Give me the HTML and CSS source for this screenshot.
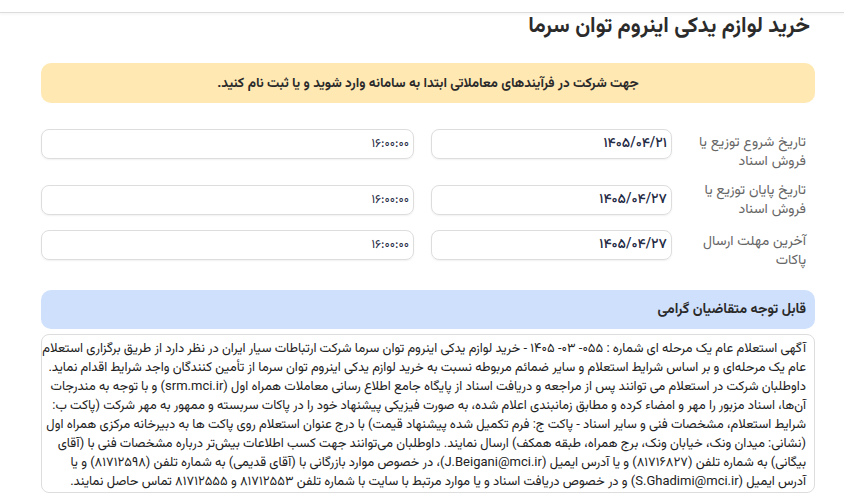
FILE: index.html
```html
<!DOCTYPE html>
<html lang="fa" dir="rtl">
<head>
<meta charset="utf-8">
<title>خرید لوازم یدکی اینروم توان سرما</title>
<link rel="stylesheet" href="styles.css">
</head>
<body>
<div class="topbar"></div>
<main class="page">
  <h1 class="title">خرید لوازم یدکی اینروم توان سرما</h1>
  <div class="alert">جهت شرکت در فرآیندهای معاملاتی ابتدا به سامانه وارد شوید و یا ثبت نام کنید.</div>

  <div class="form">
    <div class="row row-1">
      <div class="lbl">تاریخ شروع توزیع یا فروش اسناد</div>
      <div class="field date">۱۴۰۵/۰۴/۲۱</div>
      <div class="field time">۱۶:۰۰:۰۰</div>
    </div>
    <div class="row row-2">
      <div class="lbl">تاریخ پایان توزیع یا فروش اسناد</div>
      <div class="field date">۱۴۰۵/۰۴/۲۷</div>
      <div class="field time">۱۶:۰۰:۰۰</div>
    </div>
    <div class="row row-3">
      <div class="lbl">آخرین مهلت ارسال پاکات</div>
      <div class="field date">۱۴۰۵/۰۴/۲۷</div>
      <div class="field time">۱۶:۰۰:۰۰</div>
    </div>
  </div>

  <div class="notice-head">قابل توجه متقاضیان گرامی</div>
  <div class="notice-body">
    <span class="ln">آگهی استعلام عام یک مرحله ای شماره : ۰۵۵- ۰۳- ۱۴۰۵ - خرید لوازم یدکی اینروم توان سرما شرکت ارتباطات سیار ایران در نظر دارد از طریق برگزاری استعلام</span>
    <span class="ln">عام یک مرحله‌ای و بر اساس شرایط استعلام و سایر ضمائم مربوطه نسبت به خرید لوازم یدکی اینروم توان سرما از تأمین کنندگان واجد شرایط اقدام نماید.</span>
    <span class="ln">داوطلبان شرکت در استعلام می توانند پس از مراجعه و دریافت اسناد از پایگاه جامع اطلاع رسانی معاملات همراه اول (srm.mci.ir) و با توجه به مندرجات</span>
    <span class="ln">آن‌ها، اسناد مزبور را مهر و امضاء کرده و مطابق زمانبندی اعلام شده، به صورت فیزیکی پیشنهاد خود را در پاکات سربسته و ممهور به مهر شرکت (پاکت ب:</span>
    <span class="ln">شرایط استعلام، مشخصات فنی و سایر اسناد - پاکت ج: فرم تکمیل شده پیشنهاد قیمت) با درج عنوان استعلام روی پاکت ها به دبیرخانه مرکزی همراه اول</span>
    <span class="ln">(نشانی: میدان ونک، خیابان ونک، برج همراه، طبقه همکف) ارسال نمایند. داوطلبان می‌توانند جهت کسب اطلاعات بیش‌تر درباره مشخصات فنی با (آقای</span>
    <span class="ln">بیگانی) به شماره تلفن (۸۱۷۱۶۸۲۷) و یا آدرس ایمیل (J.Beigani@mci.ir)، در خصوص موارد بازرگانی با (آقای قدیمی) به شماره تلفن (۸۱۷۱۲۵۹۸) و یا</span>
    <span class="ln">آدرس ایمیل (S.Ghadimi@mci.ir) و در خصوص دریافت اسناد و یا موارد مرتبط با سایت با شماره تلفن ۸۱۷۱۲۵۵۳ و ۸۱۷۱۲۵۵۵ تماس حاصل نمایند.</span>
  </div>
</main>
</body>
</html>
```
FILE: styles.css
```css
html, body {
  margin: 0;
  padding: 0;
  background: #ffffff;
}
body {
  direction: rtl;
  font-family: "Vazirmatn", "Noto Sans Arabic", "DejaVu Sans", sans-serif;
  color: #333333;
}
.topbar {
  height: 12px;
  border-bottom: 1px solid #dcdcdc;
  box-shadow: 0 2px 2px rgba(0,0,0,0.03);
}
.page {
  padding: 0 29px 0 41px;
}
.title {
  margin: 2px 5px 0 0;
  font-size: 21.5px;
  line-height: 24px;
  font-weight: bold;
  color: #2b2b2b;
}
.alert {
  margin-top: 24px;
  height: 40px;
  display: flex;
  align-items: center;
  justify-content: center;
  background: #ffe8b2;
  border-radius: 10px;
  font-size: 13.5px;
  font-weight: bold;
  color: #2a2a2a;
}
.form {
  margin-top: 26px;
  display: flex;
  flex-direction: column;
  gap: 10px;
}
.row {
  display: grid;
  grid-template-columns: 143px 241px 1fr;
  align-items: start;
}
.lbl {
  padding-right: 9px;
  font-size: 14px;
  line-height: 19px;
  color: #666666;
}
.row-1 .lbl { padding-top: 5px; }
.row-2 .field { margin-top: 3px; }
.row-3 .lbl { padding-top: 3px; }
.field {
  height: 30px;
  box-sizing: border-box;
  border: 1px solid #dddddd;
  border-radius: 8px;
  box-shadow: 0 1px 2px rgba(0,0,0,0.06);
  padding-right: 4px;
  display: flex;
  align-items: center;
  color: #1f2a44;
}
.date {
  font-size: 14px;
  font-weight: 500;
}
.time {
  margin-right: 17px;
  font-size: 12.5px;
}
.notice-head {
  margin-top: 19px;
  height: 39px;
  display: flex;
  align-items: center;
  padding-right: 9px;
  background: #cfe0fc;
  border-radius: 10px;
  font-size: 14px;
  font-weight: bold;
  color: #2a2a2a;
}
.notice-body {
  margin-top: 5px;
  box-sizing: border-box;
  height: 159px;
  border: 1px solid #dddddd;
  border-radius: 8px;
  padding: 3px 8px 0 6px;
  font-family: Roboto, "Vazirmatn", "Noto Sans Arabic", "DejaVu Sans", sans-serif;
  font-size: 13px;
  line-height: 19px;
  color: #222222;
}
.ln {
  display: block;
  white-space: nowrap;
}
```
